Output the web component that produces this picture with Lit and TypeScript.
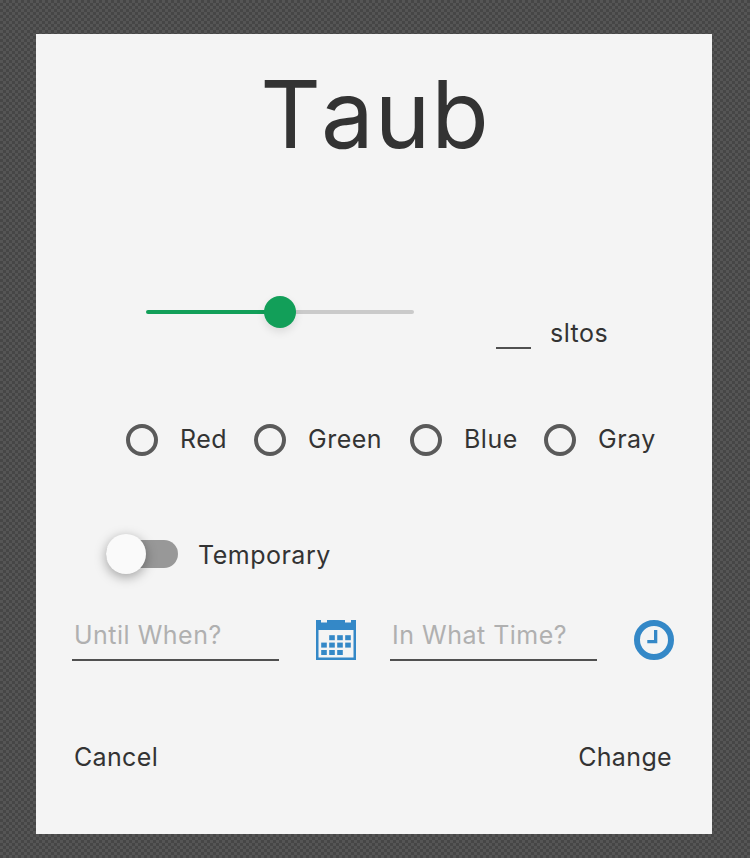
import { LitElement, html, css, svg } from "lit";
import { customElement } from "lit/decorators.js";

const DAYS = [[1, 0], [2, 0], [3, 0], [0, 1], [1, 1], [2, 1], [3, 1], [0, 2], [1, 2], [2, 2]];

@customElement("app-root")
export class AppRoot extends LitElement {
  static styles = css`
    :host { display: block; height: 858px; box-sizing: border-box; padding: 34px 38px 24px 36px;
      font: 25px/32px Inter, Roboto, sans-serif; letter-spacing: .5px; color: #333; overflow: hidden;
      background: repeating-conic-gradient(#464646 0 25%, #555 0 50%) 0 0 / 6px 6px; }
    .dialog { height: 800px; background: #f4f4f4; display: flex; flex-direction: column; box-sizing: border-box; }
    .title { margin: 0; height: 160px; line-height: 161px; font-size: 94px; font-weight: 400; text-align: center; letter-spacing: 1px; padding-left: 2px; }
    .initial { letter-spacing: 0; }
    .row { display: flex; align-items: center; white-space: nowrap; }
    .amount { height: 100px; margin-top: 86px; padding-left: 110px; align-items: flex-start; }
    .track { width: 268px; height: 4px; border-radius: 2px; margin-top: 30px; display: flex; align-items: center;
      background: linear-gradient(90deg, #129f59 50%, #cacaca 50%); justify-content: center; }
    .knob { width: 32px; height: 32px; flex: none; border-radius: 50%; background: #129f59; box-shadow: 0 4px 8px rgba(0,0,0,.1); }
    .blank { width: 35px; height: 2px; background: #505050; margin: 67px 19px 0 82px; }
    .unit { margin-top: 37px; }
    .colors { height: 32px; margin-top: 44px; padding-left: 90px; }
    .radio { width: 32px; height: 32px; border: 4px solid #5a5a5a; border-radius: 50%; box-sizing: border-box; flex: none; margin-right: 22px; }
    .option { display: flex; line-height: 30px; }
    .red { width: 128px; } .green { width: 156px; } .blue { width: 134px; }
    .temp { height: 40px; line-height: 36px; margin-top: 78px; padding-left: 70px; }
    .temp-label { padding-top: 2px; }
    .toggle { width: 72px; height: 28px; border-radius: 14px; background: #989898; display: flex; align-items: center; margin-right: 20px; }
    .thumb { width: 40px; height: 40px; flex: none; border-radius: 50%; background: #fafafa; box-shadow: 0 3px 12px rgba(0,0,0,.35); }
    .when { height: 47px; margin-top: 40px; padding-left: 36px; align-items: flex-start; }
    .field { width: 207px; height: 47px; box-sizing: border-box; border-bottom: 2px solid #505050; padding: 5px 0 0 2px; color: #b0b0b0; }
    .icon { width: 40px; height: 40px; margin: 6px 34px 0 37px; display: block; fill: #3488c7; }
    .actions { justify-content: space-between; padding: 0 40px 0 38px; margin-top: 80px; letter-spacing: .35px; }
  `;

  render() {
    return html`<div class="dialog">
      <h1 class="title"><span class="initial">T</span>aub</h1>
      <div class="row amount">
        <div class="track"><div class="knob"></div></div>
        <div class="blank"></div><span class="unit">sltos</span>
      </div>
      <div class="row colors">
        ${["Red", "Green", "Blue", "Gray"].map((c) => html`<div class="option ${c.toLowerCase()}"><div class="radio"></div><span>${c}</span></div>`)}
      </div>
      <div class="row temp"><div class="toggle"><div class="thumb"></div></div><span class="temp-label">Temporary</span></div>
      <div class="row when">
        <div class="field">Until When?</div>
        <svg class="icon" viewBox="0 0 40 40">
          <path fill-rule="evenodd" d="M0 0H5V2.5H11V0H29V2.5H35V0H40V40H0ZM2.5 10V37.5H37.5V10Z"></path>
          ${DAYS.map(([x, y]) => svg`<rect x=${5.2 + x * 8} y=${15.2 + y * 7.4} width="5.6" height="5"></rect>`)}
        </svg>
        <div class="field">In What Time?</div>
        <svg class="icon" viewBox="0 0 40 40">
          <circle cx="20" cy="20" r="17" fill="none" stroke="#3488c7" stroke-width="6"></circle>
          <path d="M20 10H23.3V23.3H13.3V20H20Z"></path>
        </svg>
      </div>
      <div class="row actions"><span>Cancel</span><span>Change</span></div>
    </div>`;
  }
}
